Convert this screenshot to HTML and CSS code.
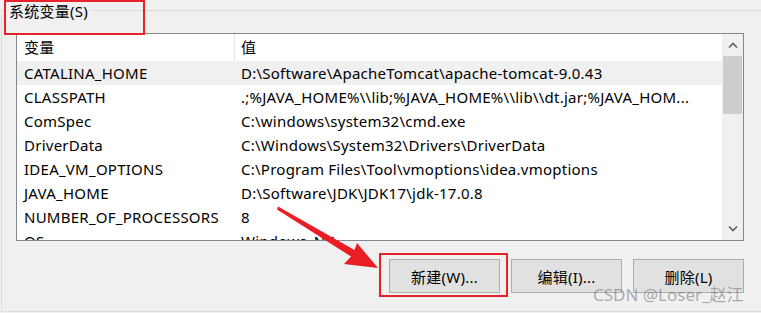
FILE: index.html
```html
<!DOCTYPE html>
<html lang="zh-CN">
<head>
  <meta charset="UTF-8">
  <meta name="viewport" content="width=device-width, initial-scale=1.0">
  <title>系统变量</title>
  <link rel="stylesheet" href="styles.css">
</head>
<body>
  <div class="group">
    <div class="legend">系统变量(S)</div>
    <div class="listbox">
      <div class="grid">
        <div class="head">
          <div class="cell name">变量</div>
          <div class="cell value">值</div>
        </div>
        <div class="rows">
          <div class="row sel"><div class="cell name">CATALINA_HOME</div><div class="cell value">D:\Software\ApacheTomcat\apache-tomcat-9.0.43</div></div>
          <div class="row"><div class="cell name">CLASSPATH</div><div class="cell value">.;%JAVA_HOME%\\lib;%JAVA_HOME%\\lib\\dt.jar;%JAVA_HOM...</div></div>
          <div class="row"><div class="cell name">ComSpec</div><div class="cell value">C:\windows\system32\cmd.exe</div></div>
          <div class="row"><div class="cell name">DriverData</div><div class="cell value">C:\Windows\System32\Drivers\DriverData</div></div>
          <div class="row"><div class="cell name">IDEA_VM_OPTIONS</div><div class="cell value">C:\Program Files\Tool\vmoptions\idea.vmoptions</div></div>
          <div class="row"><div class="cell name">JAVA_HOME</div><div class="cell value">D:\Software\JDK\JDK17\jdk-17.0.8</div></div>
          <div class="row"><div class="cell name">NUMBER_OF_PROCESSORS</div><div class="cell value">8</div></div>
          <div class="row"><div class="cell name">OS</div><div class="cell value">Windows_NT</div></div>
        </div>
      </div>
      <div class="scrollbar">
        <div class="arrow">
          <svg width="10" height="6" viewBox="0 0 10 6"><path d="M1 5.5 L5 1.5 L9 5.5" fill="none" stroke="#606060" stroke-width="1.6"/></svg>
        </div>
        <div class="track"><div class="thumb"></div></div>
        <div class="arrow">
          <svg width="10" height="6" viewBox="0 0 10 6"><path d="M1 0.5 L5 4.5 L9 0.5" fill="none" stroke="#606060" stroke-width="1.6"/></svg>
        </div>
      </div>
    </div>
    <div class="buttons">
      <button type="button">新建(W)...</button>
      <button type="button">编辑(I)...</button>
      <button type="button">删除(L)</button>
    </div>
  </div>

  <!-- annotations -->
  <div class="mark mark-legend"></div>
  <div class="mark mark-new"></div>
  <svg class="pointer" width="761" height="313" viewBox="0 0 761 313">
    <polygon points="278,206.5 354.5,250 357,243 378,268 344,264 351,256.5 277,209.5" fill="#ea1c24"/>
  </svg>
  <div class="watermark">CSDN @Loser_赵江</div>
</body>
</html>
```

FILE: styles.css
```css
* { box-sizing: border-box; }
body { margin: 0; padding-top: 10px; background: #f0f0f0; font-family: "Noto Sans", "Noto Sans CJK SC", sans-serif; font-size: 15px; letter-spacing: 0.25px; color: #000; overflow: hidden; position: relative; height: 313px; }

.group { margin-left: 1px; margin-right: -20px; height: 302px; border: 1px solid #dcdcdc; border-right: none; }
.legend { width: fit-content; height: 21px; line-height: 21px; margin: -10px 0 0 4px; padding: 0 3px; background: #f0f0f0; }

.listbox { display: flex; width: 728px; height: 208px; margin: 11px 0 0 14px; border: 1px solid #828790; background: #fff; }
.grid { flex: 1; display: flex; flex-direction: column; overflow: hidden; }
.head { display: flex; height: 27px; line-height: 27px; flex: none; }
.head .name { border-right: 1px solid #e5e5e5; }
.head .value { padding-left: 5px; }
.rows { flex: 1; overflow: hidden; }
.row { display: flex; height: 24px; line-height: 24px; }
.row.sel { background: #f0f0f0; }
.cell { white-space: nowrap; }
.cell.name { width: 218px; padding-left: 7px; flex: none; }
.cell.value { padding-left: 6px; }

.scrollbar { width: 21px; flex: none; display: flex; flex-direction: column; background: #f0f0f0; }
.arrow { height: 22px; display: flex; align-items: center; justify-content: center; flex: none; }
.track { flex: 1; }
.thumb { height: 58px; margin: 0 1px; background: #cdcdcd; }

.buttons { display: flex; justify-content: flex-end; gap: 11px; width: 728px; margin: 18px 0 0 14px; }
.buttons button { width: 111px; height: 34px; padding: 0; border: 1px solid #adadad; background: #e1e1e1; font: inherit; letter-spacing: inherit; color: #000; }

.mark { position: absolute; border: 2px solid #e8222a; }
.mark-legend { left: 4px; top: 0; width: 141px; height: 35px; }
.mark-new { left: 379px; top: 253px; width: 129px; height: 44px; }
.pointer { position: absolute; left: 0; top: 0; }
.watermark { position: absolute; left: 593px; top: 284px; font-size: 17px; line-height: 22px; letter-spacing: 0; color: rgba(110,110,110,0.55); white-space: nowrap; }
```
